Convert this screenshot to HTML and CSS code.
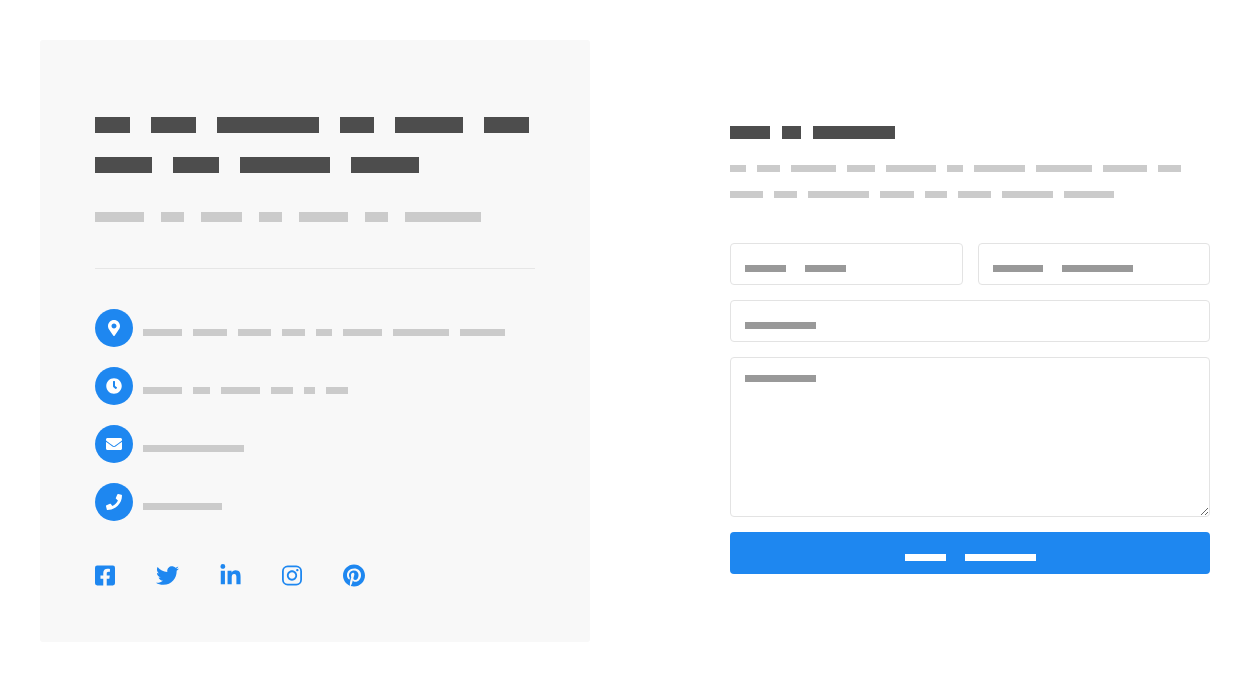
FILE: index.html
```html
<!DOCTYPE html>
<html lang="en">
<head>
<meta charset="utf-8">
<meta name="viewport" content="width=device-width, initial-scale=1">
<title>Contact</title>
<link rel="stylesheet" href="styles.css">
</head>
<body>
<main class="page">
  <section class="card">
    <h1 class="bars title"><i style="width:35px"></i><i style="width:45px"></i><i style="width:102px"></i><i style="width:34px"></i><i style="width:68px"></i><i style="width:45px"></i><i style="width:57px"></i><i style="width:46px"></i><i style="width:90px"></i><i style="width:68px"></i></h1>
    <p class="bars subtitle"><i style="width:49px"></i><i style="width:23px"></i><i style="width:41px"></i><i style="width:23px"></i><i style="width:49px"></i><i style="width:23px"></i><i style="width:76px"></i></p>
    <hr class="rule">
    <ul class="details">
      <li class="detail">
        <span class="badge"><svg class="glyph" viewBox="0 0 384 512"><path d="M172.268 501.67C26.97 291.031 0 269.413 0 192 0 85.961 85.961 0 192 0s192 85.961 192 192c0 77.413-26.97 99.031-172.268 309.67-9.535 13.774-29.93 13.773-39.464 0zM192 272c44.183 0 80-35.817 80-80s-35.817-80-80-80-80 35.817-80 80 35.817 80 80 80z"/></svg></span>
        <span class="bars copy"><i style="width:39px"></i><i style="width:34px"></i><i style="width:33px"></i><i style="width:23px"></i><i style="width:16px"></i><i style="width:39px"></i><i style="width:56px"></i><i style="width:45px"></i></span>
      </li>
      <li class="detail">
        <span class="badge"><svg class="glyph" viewBox="0 0 512 512"><path d="M256,8C119,8,8,119,8,256S119,504,256,504,504,393,504,256,393,8,256,8Zm92.49,313h0l-20,25a16,16,0,0,1-22.49,2.5h0l-67-49.72a40,40,0,0,1-15-31.23V112a16,16,0,0,1,16-16h32a16,16,0,0,1,16,16V256l58,42.5A16,16,0,0,1,348.49,321Z"/></svg></span>
        <span class="bars copy"><i style="width:39px"></i><i style="width:17px"></i><i style="width:39px"></i><i style="width:22px"></i><i style="width:11px"></i><i style="width:22px"></i></span>
      </li>
      <li class="detail">
        <span class="badge"><svg class="glyph" viewBox="0 0 512 512"><path d="M502.3 190.8c3.9-3.1 9.7-.2 9.7 4.7V400c0 26.5-21.5 48-48 48H48c-26.5 0-48-21.5-48-48V195.6c0-5 5.7-7.8 9.7-4.7 22.4 17.4 52.1 39.5 154.1 113.6 21.1 15.4 56.7 47.8 92.2 47.6 35.7.3 72-32.8 92.3-47.6 102-74.1 131.6-96.3 154-113.7zM256 320c23.2.4 56.6-29.2 73.4-41.4 132.7-96.3 142.8-104.7 173.4-128.7 5.8-4.5 9.2-11.5 9.2-18.9v-19c0-26.5-21.5-48-48-48H48c-26.5 0-48 21.5-48 48v19c0 7.4 3.4 14.3 9.2 18.9 30.6 23.9 40.7 32.4 173.4 128.7 16.8 12.2 50.2 41.8 73.4 41.4z"/></svg></span>
        <span class="bars copy"><i style="width:101px"></i></span>
      </li>
      <li class="detail">
        <span class="badge"><svg class="glyph" viewBox="0 0 512 512"><path d="M493.4 24.6l-104-24c-11.3-2.6-22.9 3.3-27.5 13.9l-48 112c-4.2 9.8-1.4 21.3 6.9 28l60.6 49.6c-36 76.7-98.9 140.5-177.2 177.2l-49.6-60.6c-6.8-8.3-18.2-11.1-28-6.9l-112 48C3.9 366.5-2 378.1.6 389.4l24 104C27.1 504.2 36.7 512 48 512c256.1 0 464-207.5 464-464 0-11.2-7.7-20.9-18.6-23.4z"/></svg></span>
        <span class="bars copy"><i style="width:79px"></i></span>
      </li>
    </ul>
    <nav class="social" aria-label="Social">
      <a href="#" aria-label="Facebook"><svg width="20" height="23" viewBox="0 0 448 512"><path d="M400 32H48A48 48 0 0 0 0 80v352a48 48 0 0 0 48 48h137.25V327.69h-63V256h63v-54.64c0-62.15 37-96.48 93.67-96.48 27.14 0 55.52 4.84 55.52 4.84v61h-31.27c-30.81 0-40.42 19.12-40.42 38.73V256h68.78l-11 71.69h-57.78V480H400a48 48 0 0 0 48-48V80a48 48 0 0 0-48-48z"/></svg></a>
      <a href="#" aria-label="Twitter"><svg width="23" height="23" viewBox="0 0 512 512"><path d="M459.37 151.716c.325 4.548.325 9.097.325 13.645 0 138.72-105.583 298.558-298.558 298.558-59.452 0-114.68-17.219-161.137-47.106 8.447.974 16.568 1.299 25.34 1.299 49.055 0 94.213-16.568 130.274-44.832-46.132-.975-84.792-31.188-98.112-72.772 6.498.974 12.995 1.624 19.818 1.624 9.421 0 18.843-1.3 27.614-3.573-48.081-9.747-84.143-51.98-84.143-102.985v-1.299c13.969 7.797 30.214 12.67 47.431 13.319-28.264-18.843-46.781-51.005-46.781-87.391 0-19.492 5.197-37.36 14.294-52.954 51.655 63.675 129.3 105.258 216.365 109.807-1.624-7.797-2.599-15.918-2.599-24.04 0-57.828 46.782-104.934 104.934-104.934 30.213 0 57.502 12.67 76.67 33.137 23.715-4.548 46.456-13.32 66.599-25.34-7.798 24.366-24.366 44.833-46.132 57.827 21.117-2.273 41.584-8.122 60.426-16.243-14.292 20.791-32.161 39.308-52.628 54.253z"/></svg></a>
      <a href="#" aria-label="LinkedIn"><svg width="21" height="23" viewBox="0 0 448 512"><path d="M100.28 448H7.4V148.9h92.88zM53.79 108.1C24.09 108.1 0 83.5 0 53.8a53.79 53.79 0 0 1 107.58 0c0 29.7-24.1 54.3-53.79 54.3zM447.9 448h-92.68V302.4c0-34.7-.7-79.2-48.29-79.2-48.29 0-55.69 37.7-55.69 76.7V448h-92.78V148.9h89.08v40.8h1.3c12.4-23.5 42.69-48.3 87.88-48.3 94 0 111.28 61.9 111.28 142.3V448z"/></svg></a>
      <a href="#" aria-label="Instagram"><svg width="20" height="23" viewBox="0 0 448 512"><path d="M224.1 141c-63.6 0-114.9 51.3-114.9 114.9s51.3 114.9 114.9 114.9S339 319.5 339 255.9 287.7 141 224.1 141zm0 189.6c-41.1 0-74.7-33.5-74.7-74.7s33.5-74.7 74.7-74.7 74.7 33.5 74.7 74.7-33.6 74.7-74.7 74.7zm146.4-194.3c0 14.9-12 26.8-26.8 26.8-14.9 0-26.8-12-26.8-26.8s12-26.8 26.8-26.8 26.8 12 26.8 26.8z"/><rect x="20" y="52" width="408" height="408" rx="108" fill="none" stroke="currentColor" stroke-width="40"/></svg></a>
      <a href="#" aria-label="Pinterest"><svg width="22" height="23" viewBox="0 0 496 512"><path d="M496 256c0 137-111 248-248 248-25.6 0-50.2-3.9-73.4-11.1 10.1-16.5 25.2-43.5 30.8-65 3-11.6 15.4-59 15.4-59 8.1 15.4 31.7 28.5 56.8 28.5 74.8 0 128.7-68.8 128.7-154.3 0-81.9-66.9-143.2-152.9-143.2-107 0-163.9 71.8-163.9 150.1 0 36.4 19.4 81.7 50.3 96.1 4.7 2.2 7.2 1.2 8.3-3.3.8-3.4 5-20.3 6.9-28.1.6-2.5.3-4.7-1.7-7.1-10.1-12.5-18.3-35.3-18.3-56.6 0-54.7 41.4-107.6 112-107.6 60.9 0 103.6 41.5 103.6 100.9 0 67.1-33.9 113.6-78 113.6-24.3 0-42.6-20.1-36.7-44.8 7-29.5 20.5-61.3 20.5-82.6 0-19-10.2-34.9-31.4-34.9-24.9 0-44.9 25.7-44.9 60.2 0 22 7.4 36.8 7.4 36.8s-24.5 103.8-29 123.2c-5 21.4-3 51.6-.9 71.2C65.4 450.9 0 361.1 0 256 0 119 111 8 248 8s248 111 248 248z"/></svg></a>
    </nav>
  </section>

  <section class="contact">
    <h2 class="bars heading"><i style="width:40px"></i><i style="width:19px"></i><i style="width:82px"></i></h2>
    <p class="bars intro"><i style="width:16px"></i><i style="width:23px"></i><i style="width:45px"></i><i style="width:28px"></i><i style="width:50px"></i><i style="width:16px"></i><i style="width:51px"></i><i style="width:56px"></i><i style="width:44px"></i><i style="width:23px"></i><i style="width:33px"></i><i style="width:23px"></i><i style="width:61px"></i><i style="width:34px"></i><i style="width:22px"></i><i style="width:33px"></i><i style="width:51px"></i><i style="width:50px"></i></p>
    <form class="form">
      <div class="field">
        <input class="control" id="name" type="text">
        <label class="bars hint" for="name" aria-label="Name"><i style="width:41px"></i><i style="width:41px"></i></label>
      </div>
      <div class="field">
        <input class="control" id="email" type="email">
        <label class="bars hint" for="email" aria-label="Email"><i style="width:50px"></i><i style="width:71px"></i></label>
      </div>
      <div class="field wide">
        <input class="control" id="subject" type="text">
        <label class="bars hint" for="subject" aria-label="Subject"><i style="width:71px"></i></label>
      </div>
      <div class="field wide">
        <textarea class="control area" id="message"></textarea>
        <label class="bars hint area-hint" for="message" aria-label="Message"><i style="width:71px"></i></label>
      </div>
      <button class="bars send wide" type="button" aria-label="Send"><i style="width:41px"></i><i style="width:71px"></i></button>
    </form>
  </section>
</main>
</body>
</html>
```
FILE: styles.css
```css
* {
  box-sizing: border-box;
}

body {
  margin: 0;
  background: #fff;
  font-family: "Open Sans", sans-serif;
  font-size: 14px;
}

.page {
  display: grid;
  grid-template-columns: 55fr 48fr;
  gap: 140px;
  align-items: center;
  padding: 40px;
}

/* Rows of blocks standing in for words */
.bars {
  display: flex;
  flex-wrap: wrap;
  margin: 0;
}

.bars i {
  height: 7px;
  background: #cbcbcb;
}

.card {
  padding: 55px;
  border-radius: 3px;
  background: #f8f8f8;
}

.title {
  gap: 24px 21px;
  padding-top: 22px;
}

.title i {
  height: 16px;
  background: #4d4d4d;
}

.subtitle {
  gap: 17px;
  margin-top: 39px;
}

.subtitle i {
  height: 10px;
}

.rule {
  height: 1px;
  margin: 46px 0 40px;
  border: 0;
  background: #e6e6e6;
}

.details {
  display: grid;
  gap: 20px;
  margin: 0;
  padding: 0;
  list-style: none;
}

.detail {
  display: flex;
  align-items: center;
  gap: 10px;
}

.badge {
  display: flex;
  flex: none;
  align-items: center;
  justify-content: center;
  width: 38px;
  height: 38px;
  border-radius: 50%;
  background: #1e87f0;
}

.glyph {
  height: 16px;
  fill: #fff;
}

.copy {
  gap: 11px;
  padding-top: 9px;
}

.social {
  display: flex;
  gap: 41px;
  margin-top: 43px;
}

.social a {
  display: flex;
  color: #1e87f0;
}

.social svg {
  fill: currentColor;
}

.heading {
  gap: 12px;
  padding-top: 18px;
}

.heading i {
  height: 13px;
  background: #4d4d4d;
}

.intro {
  gap: 19px 11px;
  margin-top: 26px;
}

.form {
  display: grid;
  grid-template-columns: 1fr 1fr;
  gap: 15px;
  margin-top: 45px;
}

.wide {
  grid-column: 1 / -1;
}

.field {
  display: grid;
  position: relative;
}

.control {
  width: 100%;
  height: 42px;
  padding: 0 14px;
  border: 1px solid #e3e3e3;
  border-radius: 4px;
  background: #fff;
  color: #4d4d4d;
  font: inherit;
}

.area {
  height: 160px;
  padding: 14px;
  resize: vertical;
}

.hint {
  position: absolute;
  top: 22px;
  left: 15px;
  gap: 19px;
  pointer-events: none;
}

.area-hint {
  top: 18px;
}

.hint i {
  background: #999;
}

.send {
  justify-content: center;
  gap: 19px;
  height: 42px;
  padding: 22px 15px 0;
  border: 0;
  border-radius: 4px;
  background: #1e87f0;
  align-content: flex-start;
}

.send i {
  background: #fff;
}
```
